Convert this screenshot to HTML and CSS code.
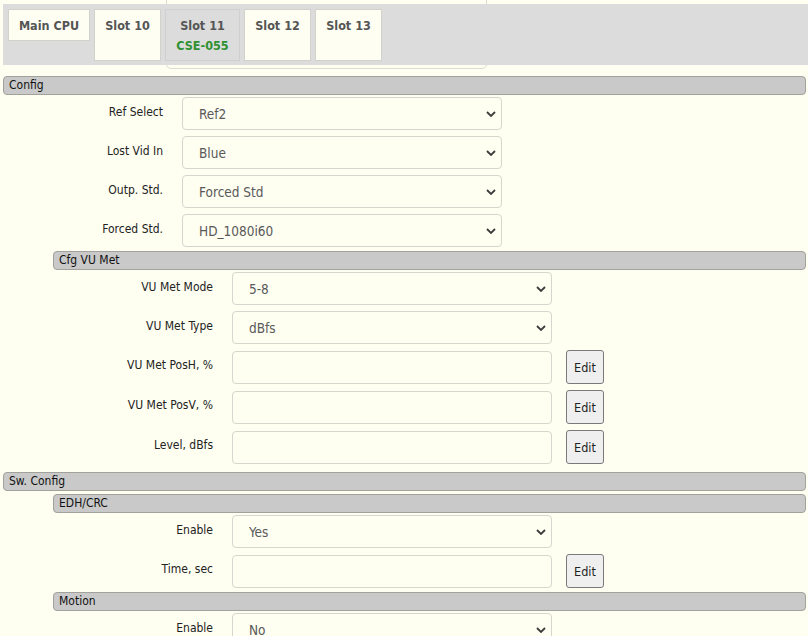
FILE: index.html
```html
<!DOCTYPE html>
<html>
<head>
<meta charset="utf-8">
<title>Slot 11</title>
<link rel="stylesheet" href="styles.css">
</head>
<body>
<div class="top">
  <div class="ghost"></div>
  <div class="tabbar">
    <div class="tab tab-main">Main CPU</div>
    <div class="tab tab-slot">Slot 10</div>
    <div class="tab tab-slot active">Slot 11<span class="card">CSE-055</span></div>
    <div class="tab tab-slot">Slot 12</div>
    <div class="tab tab-slot">Slot 13</div>
  </div>
</div>

<div class="group lvl1">
  <div class="hdr">Config</div>
  <div class="row">
    <label class="lbl">Ref Select</label>
    <div class="ctl"><select class="sel"><option>Ref2</option></select><svg class="chev" width="10" height="6" viewBox="0 0 10 6"><path d="M1 1 L5 5 L9 1" fill="none" stroke="#3c3c3c" stroke-width="1.8"/></svg></div>
  </div>
  <div class="row">
    <label class="lbl">Lost Vid In</label>
    <div class="ctl"><select class="sel"><option>Blue</option></select><svg class="chev" width="10" height="6" viewBox="0 0 10 6"><path d="M1 1 L5 5 L9 1" fill="none" stroke="#3c3c3c" stroke-width="1.8"/></svg></div>
  </div>
  <div class="row">
    <label class="lbl">Outp. Std.</label>
    <div class="ctl"><select class="sel"><option>Forced Std</option></select><svg class="chev" width="10" height="6" viewBox="0 0 10 6"><path d="M1 1 L5 5 L9 1" fill="none" stroke="#3c3c3c" stroke-width="1.8"/></svg></div>
  </div>
  <div class="row">
    <label class="lbl">Forced Std.</label>
    <div class="ctl"><select class="sel"><option>HD_1080i60</option></select><svg class="chev" width="10" height="6" viewBox="0 0 10 6"><path d="M1 1 L5 5 L9 1" fill="none" stroke="#3c3c3c" stroke-width="1.8"/></svg></div>
  </div>

  <div class="group lvl2">
    <div class="hdr">Cfg VU Met</div>
    <div class="row">
      <label class="lbl">VU Met Mode</label>
      <div class="ctl"><select class="sel"><option>5-8</option></select><svg class="chev" width="10" height="6" viewBox="0 0 10 6"><path d="M1 1 L5 5 L9 1" fill="none" stroke="#3c3c3c" stroke-width="1.8"/></svg></div>
    </div>
    <div class="row">
      <label class="lbl">VU Met Type</label>
      <div class="ctl"><select class="sel"><option>dBfs</option></select><svg class="chev" width="10" height="6" viewBox="0 0 10 6"><path d="M1 1 L5 5 L9 1" fill="none" stroke="#3c3c3c" stroke-width="1.8"/></svg></div>
    </div>
    <div class="row">
      <label class="lbl">VU Met PosH, %</label>
      <div class="ctl"><input class="inp" type="text"></div>
      <button class="btn">Edit</button>
    </div>
    <div class="row">
      <label class="lbl">VU Met PosV, %</label>
      <div class="ctl"><input class="inp" type="text"></div>
      <button class="btn">Edit</button>
    </div>
    <div class="row">
      <label class="lbl">Level, dBfs</label>
      <div class="ctl"><input class="inp" type="text"></div>
      <button class="btn">Edit</button>
    </div>
  </div>
</div>

<div class="group lvl1">
  <div class="hdr">Sw. Config</div>
  <div class="group lvl2">
    <div class="hdr">EDH/CRC</div>
    <div class="row">
      <label class="lbl">Enable</label>
      <div class="ctl"><select class="sel"><option>Yes</option></select><svg class="chev" width="10" height="6" viewBox="0 0 10 6"><path d="M1 1 L5 5 L9 1" fill="none" stroke="#3c3c3c" stroke-width="1.8"/></svg></div>
    </div>
    <div class="row">
      <label class="lbl">Time, sec</label>
      <div class="ctl"><input class="inp" type="text"></div>
      <button class="btn">Edit</button>
    </div>
  </div>
  <div class="group lvl2">
    <div class="hdr">Motion</div>
    <div class="row">
      <label class="lbl">Enable</label>
      <div class="ctl"><select class="sel"><option>No</option></select><svg class="chev" width="10" height="6" viewBox="0 0 10 6"><path d="M1 1 L5 5 L9 1" fill="none" stroke="#3c3c3c" stroke-width="1.8"/></svg></div>
    </div>
  </div>
</div>
</body>
</html>
```

FILE: styles.css
```css
html, body {
  margin: 0;
  padding: 0;
  background: #fefef1;
  font-family: "DejaVu Sans Condensed", "DejaVu Sans", sans-serif;
  font-stretch: condensed;
  font-size: 12px;
  color: #2a2a2a;
  overflow: hidden;
}

.top {
  position: relative;
  padding-top: 4px;
  margin-bottom: 11px;
}

.ghost {
  position: absolute;
  left: 166px;
  top: -10px;
  width: 321px;
  height: 79px;
  box-sizing: border-box;
  border: 1px solid #dcdcd4;
  border-radius: 5px;
  background: #fefef1;
}

.tabbar {
  position: relative;
  margin-left: 3px;
  height: 61px;
  box-sizing: border-box;
  background: #dcdcdc;
  padding: 5px 0 0 5px;
  display: flex;
  align-items: flex-start;
  gap: 4px;
}

.tab {
  box-sizing: border-box;
  padding: 6px 8px 4px;
  border: 1px solid #d2d2cc;
  background: #fefef3;
  font-size: 12.5px;
  font-weight: bold;
  line-height: 20px;
  color: #555;
  text-align: center;
  white-space: nowrap;
  display: flex;
  flex-direction: column;
  align-items: center;
}

.tab-main { width: 82px; height: 32px; }
.tab-slot { width: 67px; height: 52px; }
.tab-slot.active { width: 75px; background: #dcdcdc; border-color: #cfcfcf; }

.card { color: #2f9132; }

.group {
  display: flex;
  flex-direction: column;
}

.lvl1 { margin: 0 2px 0 3px; }
.lvl1 + .lvl1 { margin-top: 2px; }
.lvl2 { margin-left: 50px; }
.row + .lvl2 { margin-top: -2px; }
.hdr + .lvl2 { margin-top: 1px; }
.lvl2 + .lvl2 { margin-top: -2px; }

.hdr {
  height: 19px;
  box-sizing: border-box;
  border: 1px solid #a2a29c;
  border-radius: 4px;
  background: #c9c9c9;
  padding-left: 5px;
  line-height: 17px;
  font-size: 12px;
  color: #111;
  margin-bottom: 2px;
}

.row {
  display: flex;
  align-items: center;
  margin-bottom: 6px;
}

.lbl {
  width: 160px;
  margin-right: 19px;
  text-align: right;
  font-size: 12px;
  color: #222;
  padding-bottom: 4px;
  box-sizing: border-box;
}

.ctl {
  position: relative;
  width: 320px;
  height: 33px;
}

.sel, .inp {
  width: 320px;
  height: 33px;
  box-sizing: border-box;
  border: 1px solid #d6d6ce;
  border-radius: 4px;
  background: #fefef1;
  font-family: "DejaVu Sans Condensed", "DejaVu Sans", sans-serif;
  font-stretch: condensed;
  font-size: 13.5px;
  color: #595959;
  padding: 0 30px 0 16px;
  margin: 0;
  outline: none;
}

.sel {
  -webkit-appearance: none;
  appearance: none;
}

.chev {
  position: absolute;
  right: 6px;
  top: 14px;
  pointer-events: none;
}

.btn {
  margin-left: 14px;
  width: 38px;
  height: 34px;
  box-sizing: border-box;
  border: 1px solid #7a7a7a;
  border-radius: 3px;
  background: #efefef;
  font-family: "DejaVu Sans Condensed", "DejaVu Sans", sans-serif;
  font-stretch: condensed;
  font-size: 12.5px;
  color: #222;
  padding: 0;
}
```
